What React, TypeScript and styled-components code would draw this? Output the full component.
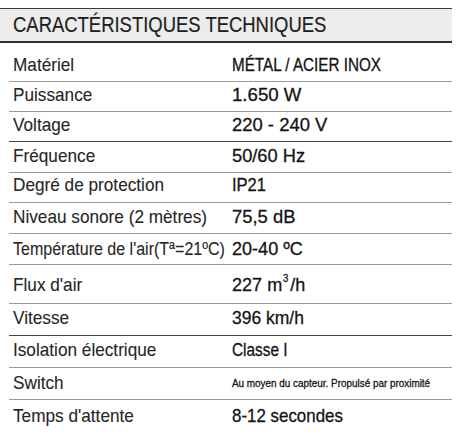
import React from 'react';
import styled, { createGlobalStyle } from 'styled-components';

const GlobalStyle = createGlobalStyle`
  html, body {
    margin: 0;
    padding: 0;
    background: #ffffff;
  }
  body {
    font-family: "Liberation Sans", Arial, sans-serif;
  }
`;

const Sheet = styled.div`
  width: 464px;
  height: 439px;
  padding-top: 8px;
  box-sizing: border-box;
  overflow: hidden;
`;

const Header = styled.div`
  width: 452px;
  height: 35px;
  box-sizing: border-box;
  border-top: 1.5px solid #3a3a3a;
  border-bottom: 2px solid #333333;
  background: #ececec;
  display: flex;
  align-items: center;
  padding-left: 13px;
`;

// the source uses a condensed grotesque; squeeze Liberation Sans to match
const Title = styled.h1`
  margin: 0;
  font-size: 22.5px;
  font-weight: normal;
  color: #1e1e1e;
  line-height: 1;
  white-space: nowrap;
  -webkit-text-stroke: 0.2px #1e1e1e;
  transform: scaleX(0.82);
  transform-origin: left center;
`;

const Table = styled.div`
  margin: 9px 0 0 9px;
  width: 443px;
`;

const Row = styled.div<{ $h: number; $dark?: boolean; $last?: boolean; $pb?: number }>`
  display: grid;
  grid-template-columns: 223px 1fr;
  align-items: end;
  height: ${(p) => p.$h}px;
  box-sizing: border-box;
  padding-bottom: ${(p) => p.$pb ?? 6}px;
  border-bottom: ${(p) => (p.$last ? 'none' : `1.5px solid ${p.$dark ? '#444444' : '#9a9a9a'}`)};
`;

const Cell = styled.div`
  min-width: 0;
  white-space: nowrap;
`;

const Label = styled.span<{ $size?: number; $sx?: number }>`
  display: inline-block;
  margin-left: 4px;
  font-size: ${(p) => p.$size ?? 19}px;
  line-height: 19px;
  color: #262626;
  -webkit-text-stroke: 0.1px #262626;
  transform: scaleX(${(p) => p.$sx ?? 0.905});
  transform-origin: left bottom;
`;

const Value = styled.span<{ $size?: number; $sx?: number }>`
  display: inline-block;
  font-size: ${(p) => p.$size ?? 19}px;
  line-height: 19px;
  color: #141414;
  -webkit-text-stroke: 0.3px #141414;
  transform: scaleX(${(p) => p.$sx ?? 0.93});
  transform-origin: left bottom;
`;

const Sup = styled.sup`
  font-size: 10px;
  vertical-align: 9px;
  line-height: 0;
  margin: 0 2px 0 1px;
`;

type Spec = {
  label: React.ReactNode;
  value: React.ReactNode;
  h: number;
  dark?: boolean;
  pb?: number;
  labelSize?: number;
  labelSx?: number;
  valueSize?: number;
  valueSx?: number;
};

const specs: Spec[] = [
  { label: 'Matériel', value: 'MÉTAL / ACIER INOX', h: 30, valueSize: 17.5, valueSx: 0.87 },
  { label: 'Puissance', value: '1.650 W', h: 30, valueSx: 0.98 },
  { label: 'Voltage', value: '220 - 240 V', h: 30, dark: true, valueSx: 0.97 },
  { label: 'Fréquence', value: '50/60 Hz', h: 31, valueSx: 0.96 },
  { label: 'Degré de protection', value: 'IP21', h: 30, pb: 7, valueSx: 0.87 },
  { label: 'Niveau sonore (2 mètres)', value: '75,5 dB', h: 31, valueSx: 0.97 },
  {
    label: "Température de l'air(Tª=21ºC)",
    value: '20-40 ºC',
    h: 31,
    pb: 5,
    labelSize: 17.5,
    labelSx: 0.915,
    valueSx: 0.95,
  },
  {
    label: "Flux d'air",
    value: (
      <>
        227 m<Sup>3</Sup>/h
      </>
    ),
    h: 39,
    pb: 8,
    valueSx: 0.95,
  },
  { label: 'Vitesse', value: '396 km/h', h: 32, dark: true, pb: 7, valueSx: 0.92 },
  { label: 'Isolation électrique', value: 'Classe I', h: 32, pb: 7, valueSx: 0.81 },
  {
    label: 'Switch',
    value: 'Au moyen du capteur. Propulsé par proximité',
    h: 32,
    valueSize: 11,
    valueSx: 0.9,
    pb: 6,
  },
  { label: "Temps d'attente", value: '8-12 secondes', h: 32, valueSx: 0.89 },
];

export default function App() {
  return (
    <>
      <GlobalStyle />
      <Sheet>
        <Header>
          <Title>CARACTÉRISTIQUES TECHNIQUES</Title>
        </Header>
        <Table>
          {specs.map((s, i) => (
            <Row key={i} $h={s.h} $dark={s.dark} $pb={s.pb} $last={i === specs.length - 1}>
              <Cell>
                <Label $size={s.labelSize} $sx={s.labelSx}>
                  {s.label}
                </Label>
              </Cell>
              <Cell>
                <Value $size={s.valueSize} $sx={s.valueSx}>
                  {s.value}
                </Value>
              </Cell>
            </Row>
          ))}
        </Table>
      </Sheet>
    </>
  );
}
